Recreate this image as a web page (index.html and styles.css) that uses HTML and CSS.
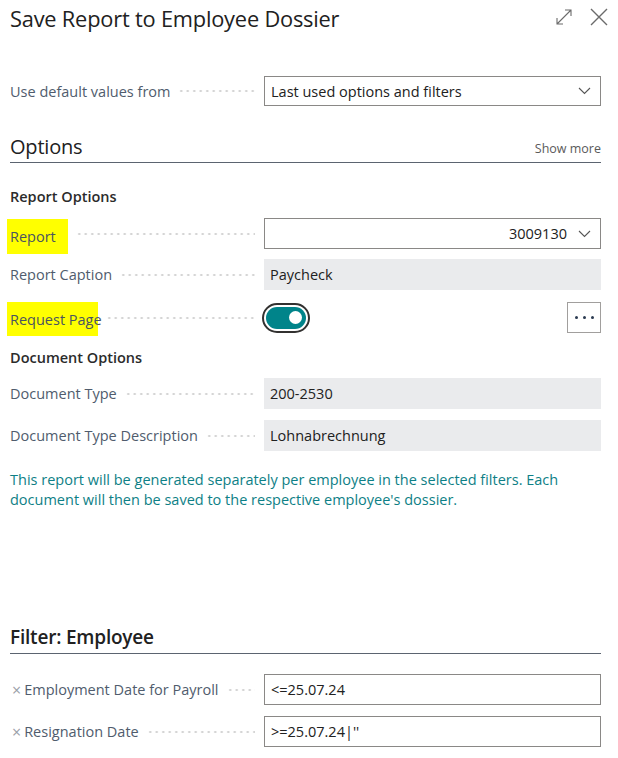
FILE: index.html
```html
<!DOCTYPE html>
<html>
<head>
<meta charset="utf-8">
<link rel="stylesheet" href="styles.css">
</head>
<body>
<div class="dialog">
  <div class="header">
    <div class="title">Save Report to Employee Dossier</div>
    <div class="header-icons">
      <svg class="ic-expand" width="18" height="18" viewBox="0 0 18 18"><path d="M2 16 L16 2 M10 2 H16 V8 M2 10 V16 H8" fill="none" stroke="#6b6b6b" stroke-width="1.1"/></svg>
      <svg class="ic-close" width="18" height="18" viewBox="0 0 18 18"><path d="M1 1 L17 17 M17 1 L1 17" fill="none" stroke="#6b6b6b" stroke-width="1.4"/></svg>
    </div>
  </div>

  <div class="row row-default">
    <div class="label"><span class="ltext">Use default values from</span><span class="leader"></span></div>
    <div class="field input select"><span class="val">Last used options and filters</span><svg class="chev" width="13" height="8" viewBox="0 0 13 8"><path d="M1 1 L6.5 6.5 L12 1" fill="none" stroke="#555" stroke-width="1.1"/></svg></div>
  </div>

  <div class="section-head">
    <span class="section-title">Options</span>
    <span class="show-more">Show more</span>
  </div>

  <div class="group-title gt-report">Report Options</div>

  <div class="row row-report">
    <div class="label"><span class="ltext hl hl-report">Report</span><span class="leader"></span></div>
    <div class="field input select right"><span class="val">3009130</span><svg class="chev" width="13" height="8" viewBox="0 0 13 8"><path d="M1 1 L6.5 6.5 L12 1" fill="none" stroke="#555" stroke-width="1.1"/></svg></div>
  </div>

  <div class="row row-caption">
    <div class="label"><span class="ltext">Report Caption</span><span class="leader"></span></div>
    <div class="field readonly"><span class="val">Paycheck</span></div>
  </div>

  <div class="row row-request">
    <div class="label"><span class="ltext hl hl-request">Request Page</span><span class="leader"></span></div>
    <div class="field plain">
      <div class="toggle"><div class="track"><span class="knob"></span></div></div>
      <div class="more-btn"><span class="dot"></span><span class="dot"></span><span class="dot"></span></div>
    </div>
  </div>

  <div class="group-title gt-doc">Document Options</div>

  <div class="row row-doctype">
    <div class="label"><span class="ltext">Document Type</span><span class="leader"></span></div>
    <div class="field readonly"><span class="val">200-2530</span></div>
  </div>

  <div class="row row-docdesc">
    <div class="label"><span class="ltext">Document Type Description</span><span class="leader"></span></div>
    <div class="field readonly"><span class="val">Lohnabrechnung</span></div>
  </div>

  <p class="info">This report will be generated separately per employee in the selected filters. Each document will then be saved to the respective employee's dossier.</p>

  <div class="section-head filter-head">
    <span class="section-title filter-title">Filter: Employee</span>
  </div>

  <div class="row row-emp">
    <div class="label"><span class="x">×</span><span class="ltext">Employment Date for Payroll</span><span class="leader"></span></div>
    <div class="field input"><span class="val">&lt;=25.07.24</span></div>
  </div>

  <div class="row row-resign">
    <div class="label"><span class="x">×</span><span class="ltext">Resignation Date</span><span class="leader"></span></div>
    <div class="field input"><span class="val">&gt;=25.07.24|''</span></div>
  </div>
</div>
</body>
</html>
```

FILE: styles.css
```css
* { box-sizing: border-box; }
body {
  margin: 0;
  background: #ffffff;
  font-family: "Open Sans", "Noto Sans", sans-serif;
  font-size: 14.5px;
  color: #212121;
}
.dialog {
  padding: 0 17px 0 10px;
  width: 618px;
}
.header {
  height: 36px;
  display: flex;
  align-items: center;
  justify-content: space-between;
}
.title {
  font-size: 21.8px;
  color: #212121;
  letter-spacing: -0.2px;
}
.header-icons {
  display: flex;
  align-items: center;
  gap: 17px;
  margin-right: -7px;
  margin-top: -3px;
}
.row {
  display: grid;
  grid-template-columns: 254px 337px;
  grid-template-rows: 31px;
  height: 31px;
  align-items: center;
}
.row-default { margin-top: 40px; height: 30px; grid-template-rows: 30px; }
.row-report { margin-top: 11px; }
.row-caption { margin-top: 10px; }
.row-request { margin-top: 12px; }
.row-doctype { margin-top: 10px; }
.row-docdesc { margin-top: 11px; }
.row-emp { margin-top: 20px; }
.row-resign { margin-top: 11px; }

.label {
  display: flex;
  align-items: center;
  height: 100%;
  color: #505c6d;
}
.ltext { white-space: nowrap; }
.leader {
  flex: 1;
  height: 4px;
  margin: 0 9px 0 8px;
  background-image: radial-gradient(circle, #d0d0d0 0.9px, transparent 1.3px);
  background-size: 6.5px 4px;
  background-repeat: repeat-x;
  background-position: left center;
}
.hl {
  background: #ffff00;
  color: #4a5460;
  display: flex;
  align-items: center;
  margin-left: -3px;
  padding-left: 3px;
}
.hl-report { width: 61px; margin-top: 6px; height: 35px; }
.hl-request { width: 91px; height: 34px; margin-top: 3px; }

.field {
  height: 100%;
  display: flex;
  align-items: center;
  padding: 0 6px;
  color: #212121;
}
.input { border: 1px solid #8a8886; background: #fff; }
.readonly { background: #eaebed; }
.select { justify-content: space-between; padding-right: 9px; }
.select.right { justify-content: flex-end; }
.select.right .chev { margin-left: 11px; }
.plain { padding: 0; justify-content: space-between; }

.toggle {
  width: 48px;
  height: 30px;
  border: 2px solid #323130;
  border-radius: 15px;
  padding: 2px;
  background: #fff;
  margin-left: -2px;
}
.track {
  width: 100%;
  height: 100%;
  border-radius: 11px;
  background: #00848a;
  display: flex;
  align-items: center;
  justify-content: flex-end;
  padding-right: 4px;
}
.knob {
  width: 13px;
  height: 13px;
  border-radius: 50%;
  background: #fff;
}
.more-btn {
  width: 34px;
  height: 31px;
  border: 1px solid #a19f9d;
  display: flex;
  align-items: center;
  justify-content: center;
  gap: 5px;
}
.dot {
  width: 3px;
  height: 3px;
  border-radius: 50%;
  background: #2a3a50;
}

.section-head {
  margin-top: 24px;
  height: 33px;
  border-bottom: 1px solid #5b6470;
  display: flex;
  align-items: center;
  justify-content: space-between;
}
.section-title {
  font-size: 20px;
  font-weight: 500;
  color: #212121;
  letter-spacing: -0.2px;
}
.show-more {
  font-size: 12.5px;
  color: #5a5a5a;
  margin-top: 5px;
}
.group-title {
  font-size: 14.5px;
  font-weight: 600;
  line-height: 20px;
  color: #2b2b2b;
}
.gt-report { margin-top: 24px; }
.gt-doc { margin-top: 15px; }

.info {
  margin: 19px 0 0 0;
  line-height: 20px;
  color: #0e7f86;
  font-size: 14.5px;
}
.filter-head { margin-top: 111px; justify-content: flex-start; }
.filter-title { font-size: 19px; font-weight: 600; }
.x {
  color: #9aa0a8;
  font-size: 16px;
  margin: 0 3px 0 2px;
  line-height: 1;
}
```
